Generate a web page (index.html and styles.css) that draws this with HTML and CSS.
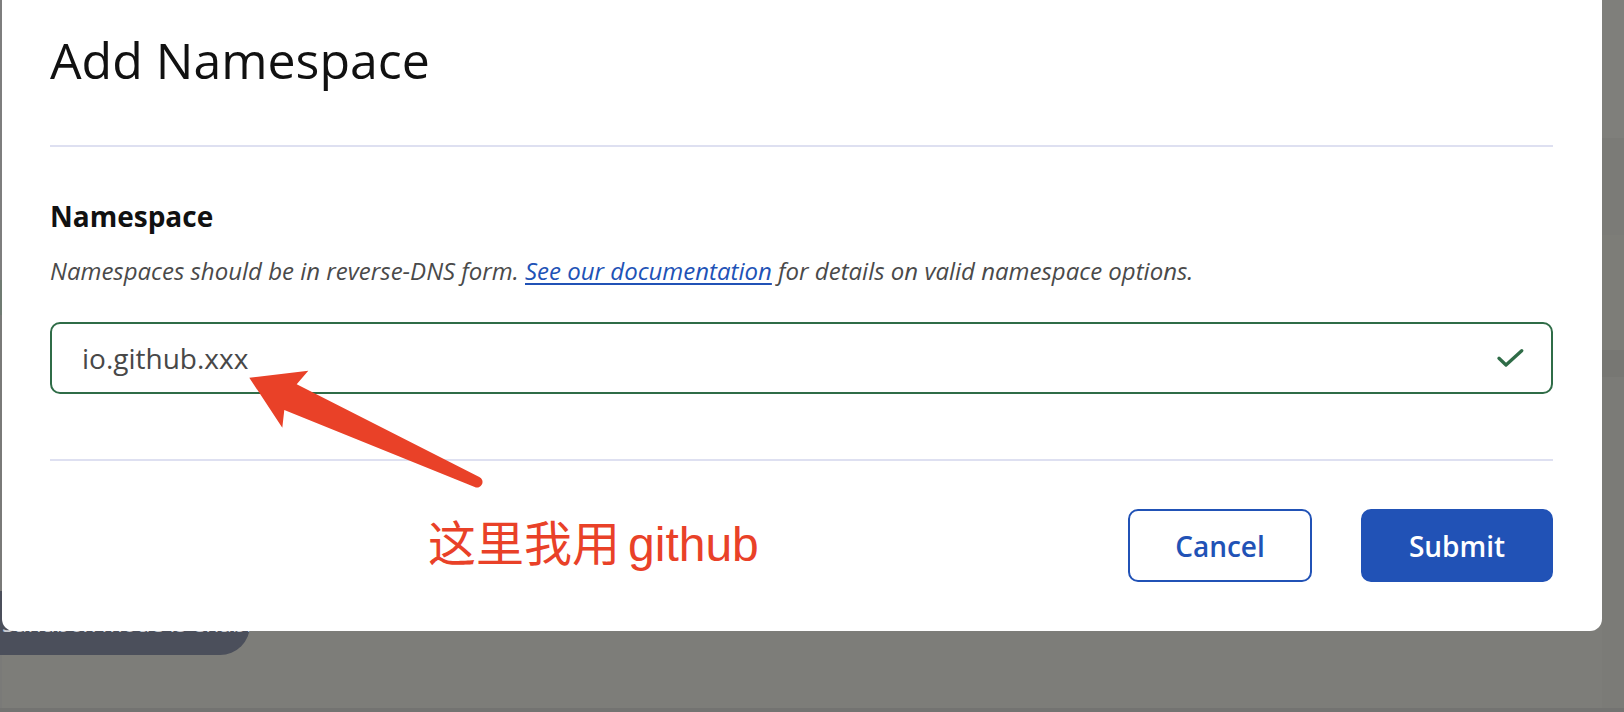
FILE: index.html
```html
<!DOCTYPE html>
<html lang="en">
<head>
<meta charset="utf-8">
<title>Add Namespace</title>
<link rel="stylesheet" href="styles.css">
</head>
<body>
  <div class="page">
    <div class="banner">Sandbox mode is enabled</div>
  </div>

  <div class="modal" role="dialog" aria-labelledby="modal-title">
    <header class="modal-header">
      <h1 class="modal-title" id="modal-title">Add Namespace</h1>
    </header>

    <section class="modal-body">
      <div class="field-label">Namespace</div>
      <p class="field-help">Namespaces should be in reverse-DNS form. <a class="help-link" href="#">See our documentation</a> for details on valid namespace options.</p>
      <div class="field-input">
        <span class="field-value">io.github.xxx</span>
        <svg class="check" width="28" height="20" viewBox="0 0 28 20" aria-hidden="true">
          <path d="M3 10.3 L10 17 L25.7 2.7" fill="none" stroke="#2f6c47" stroke-width="3.3" stroke-linecap="round" stroke-linejoin="round"/>
        </svg>
      </div>
    </section>

    <footer class="modal-footer">
      <button class="btn btn-outline" type="button">Cancel</button>
      <button class="btn btn-primary" type="button">Submit</button>
    </footer>

    <svg class="arrow" width="250" height="135" viewBox="0 0 250 135" aria-hidden="true">
      <path d="M9.3 17.7 L68.3 10.7 L56.7 24.3 L239.3 117 A5.5 5.5 0 0 1 234.7 127 L44.3 50 L42.3 67.7 Z" fill="#e94128"/>
    </svg>
    <div class="annotation">这里我用<span class="annotation-latin">github</span></div>
  </div>
</body>
</html>
```

FILE: styles.css
```css
html, body {
  margin: 0;
  padding: 0;
}

body {
  width: 1624px;
  height: 712px;
  overflow: hidden;
  font-family: "Open Sans", "Noto Sans", sans-serif;
  background:
    linear-gradient(to bottom,
      #7f7f7b 0 138px,
      #7b7b77 138px 235px,
      #7d7d78 235px 350px,
      #777773 350px 377px,
      #7b7b77 377px 708px,
      #737371 708px) right top / 22px 100% no-repeat,
    linear-gradient(to bottom,
      #7e7e7e 0 280px,
      #6f7b72 280px 315px,
      #7a7a78 315px 708px,
      #737371 708px) left top / 2px 100% no-repeat,
    linear-gradient(to bottom, #7d7d79 0 708px, #737371 708px);
}

.page {
  height: 712px;
  box-sizing: border-box;
  display: flex;
  flex-direction: column;
  justify-content: flex-end;
  padding-bottom: 57px;
}

.banner {
  width: 250px;
  height: 64px;
  box-sizing: border-box;
  background: #4b4f5b;
  border-radius: 0 30px 30px 0;
  color: #c9cbd2;
  font-size: 23px;
  line-height: 24px;
  padding: 20px 0 0 2px;
  white-space: nowrap;
  overflow: hidden;
}

.modal {
  position: fixed;
  left: 2px;
  top: 0;
  width: 1600px;
  height: 631px;
  box-sizing: border-box;
  padding: 0 49px 0 48px;
  background: #ffffff;
  border-radius: 0 0 12px 12px;
}

.modal-header {
  padding: 26px 0 51px;
  border-bottom: 2px solid #dee0f1;
}

.modal-title {
  margin: 0;
  font-size: 50px;
  line-height: 68px;
  font-weight: 400;
  color: #111111;
}

.modal-body {
  padding: 50px 0 65px;
  border-bottom: 2px solid #dee0f1;
}

.field-label {
  font-size: 28px;
  line-height: 38px;
  font-weight: 700;
  color: #111111;
}

.field-help {
  margin: 20px 0 0;
  font-size: 24px;
  line-height: 32px;
  font-style: italic;
  color: #4a4a4a;
}

.help-link {
  color: #2152b6;
  text-decoration: underline;
  text-underline-offset: 3px;
}

.field-input {
  margin-top: 35px;
  height: 72px;
  box-sizing: border-box;
  border: 2px solid #2f6c47;
  border-radius: 10px;
  display: flex;
  align-items: center;
  justify-content: space-between;
  padding: 0 27px 0 30px;
}

.field-value {
  font-size: 28px;
  line-height: 38px;
  color: #484848;
}

.check {
  display: block;
}

.modal-footer {
  padding-top: 48px;
  display: flex;
  justify-content: flex-end;
  gap: 49px;
}

.btn {
  height: 73px;
  box-sizing: border-box;
  border-radius: 10px;
  font-family: "Open Sans", "Noto Sans", sans-serif;
  font-size: 28px;
  font-weight: 600;
  line-height: 1;
  padding: 0;
  cursor: pointer;
}

.btn-outline {
  width: 184px;
  background: #ffffff;
  color: #2152b6;
  border: 2px solid #2152b6;
}

.btn-primary {
  width: 192px;
  background: #2152b6;
  color: #ffffff;
  border: 2px solid #2152b6;
}

.arrow {
  position: absolute;
  left: 238px;
  top: 360px;
}

.annotation {
  position: absolute;
  left: 426px;
  top: 521px;
  font-family: "Liberation Sans", "Noto Sans CJK SC", sans-serif;
  font-size: 48px;
  line-height: 48px;
  color: #e94128;
  white-space: nowrap;
}

.annotation-latin {
  margin-left: 8px;
}
```
